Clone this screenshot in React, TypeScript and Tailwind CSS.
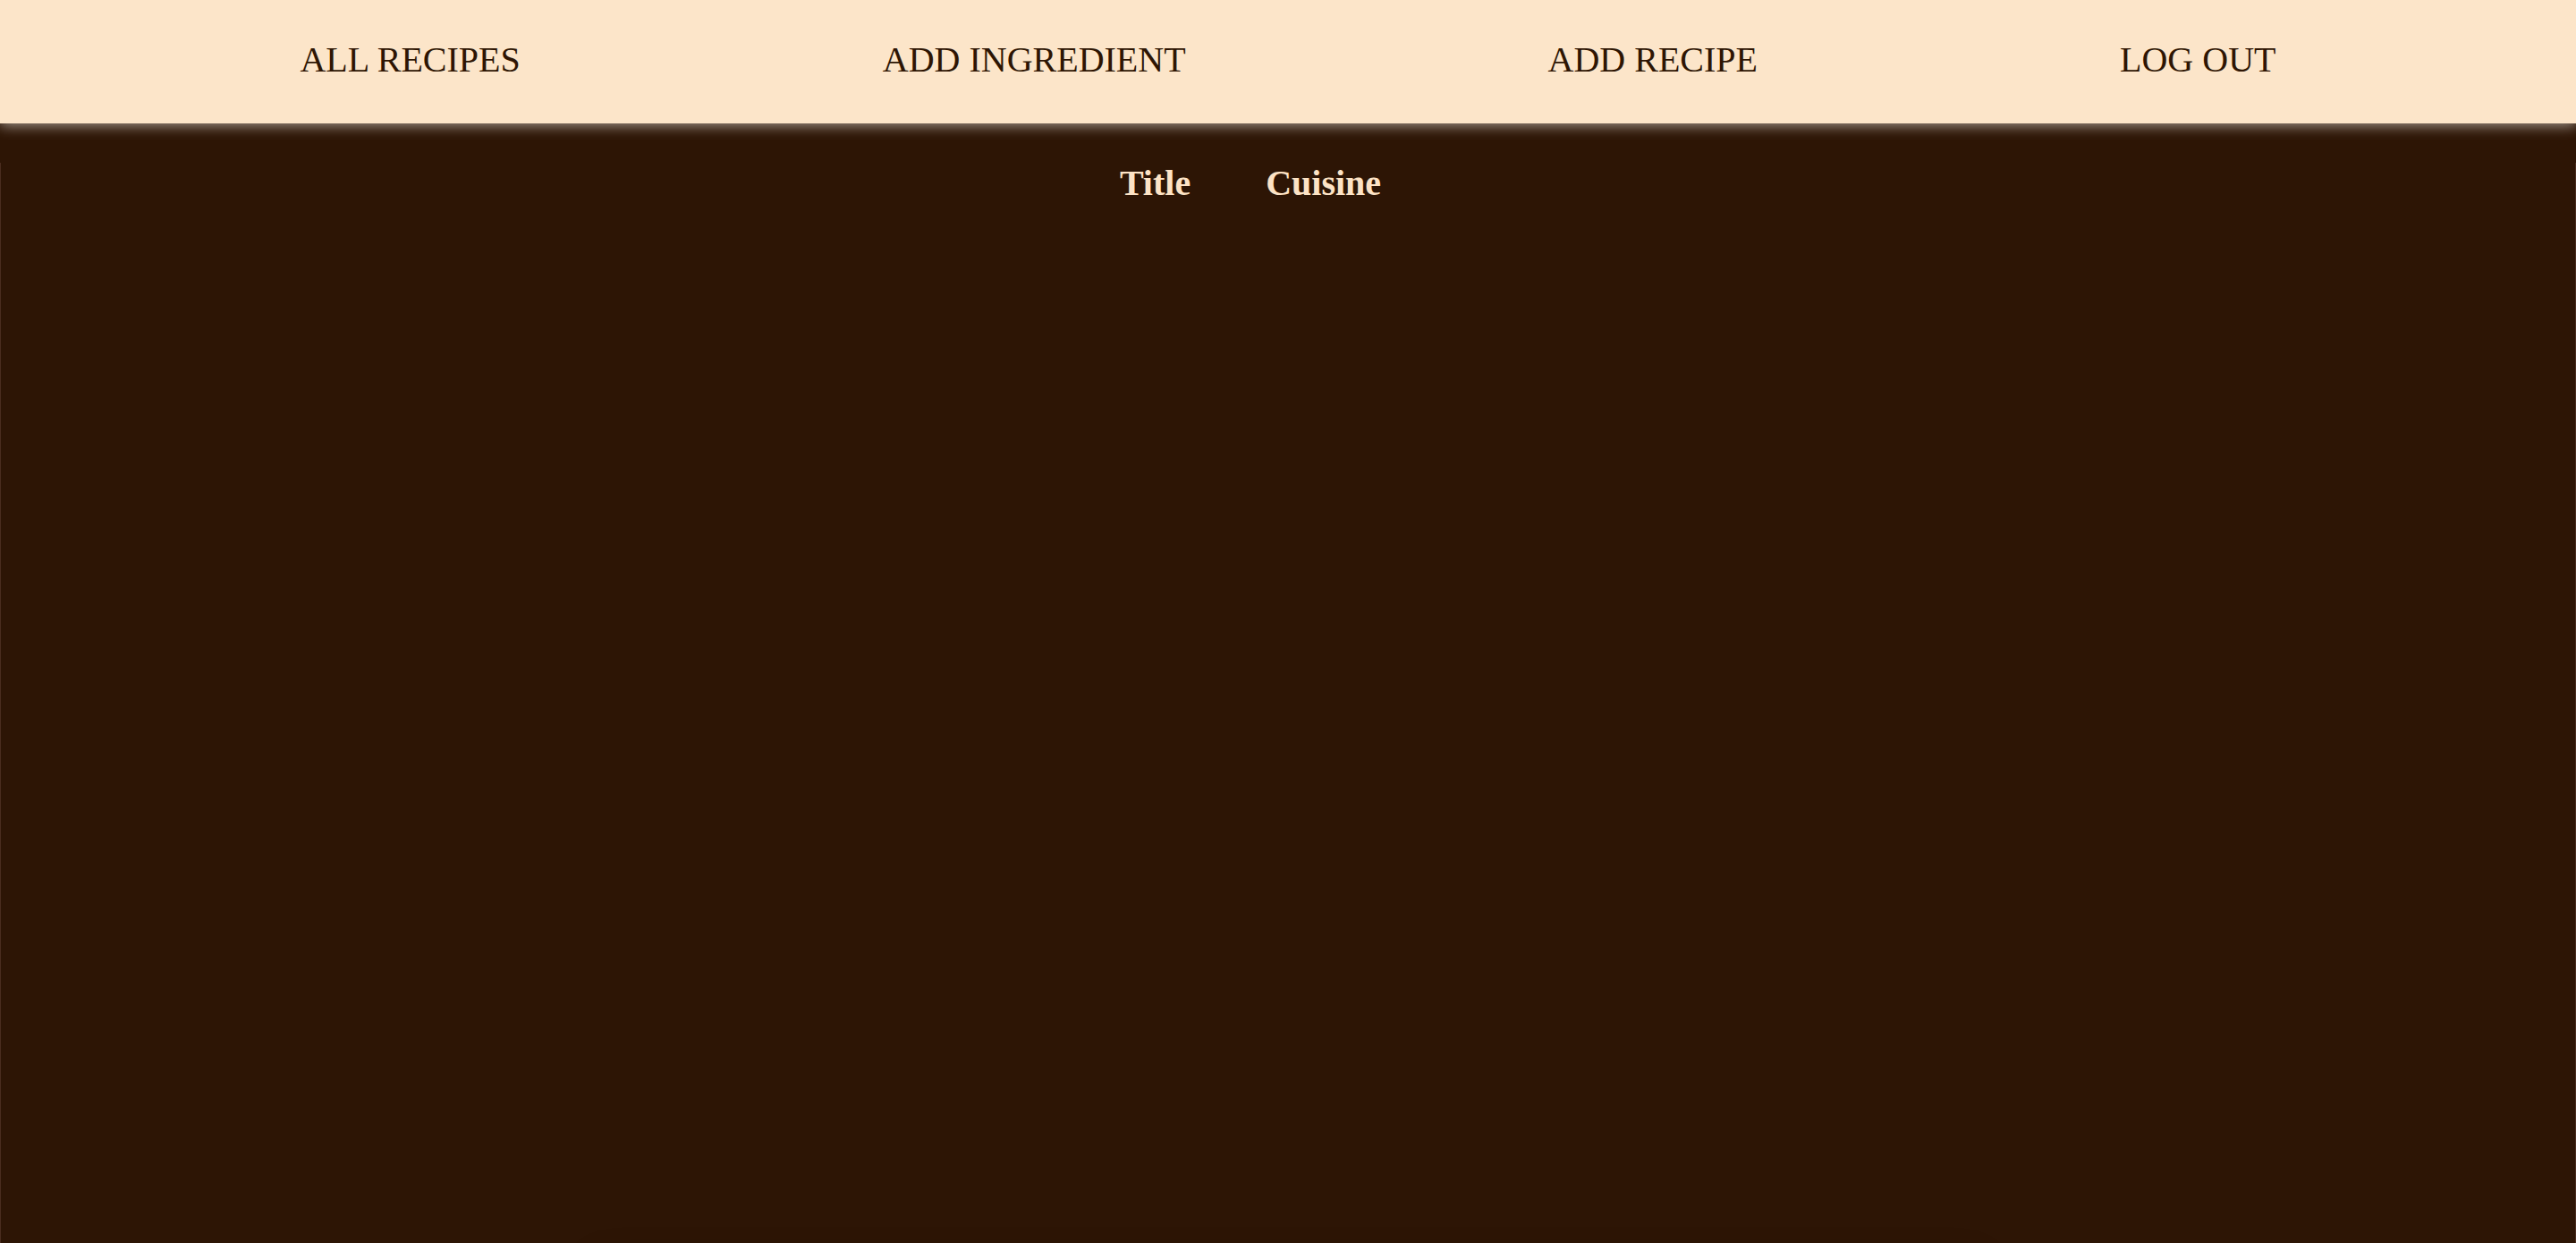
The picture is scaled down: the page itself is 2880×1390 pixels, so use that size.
import React from 'react';

const links = ['ALL RECIPES', 'ADD INGREDIENT', 'ADD RECIPE', 'LOG OUT'];

export default function App() {
  return (
    <div className="h-[1390px] overflow-hidden bg-[#2d1505] font-['Liberation_Serif',serif]">
      {/* Top navigation */}
      <nav className="relative z-10 h-[138px] bg-[#fce5c9] shadow-[0_3px_14px_rgba(170,160,150,0.9)] flex items-center justify-around px-[133px]">
        {links.map((label) => (
          <a key={label} href="#" className="text-[40px] leading-[1.15] text-[#2e1503] -mt-1">
            {label}
          </a>
        ))}
      </nav>

      {/* Recipe list */}
      <main className="relative h-[1252px] border-x border-[#4a2c1e] rounded-b-[24px]">
        <table className="mx-auto mt-[44px] translate-x-[-42px]">
          <thead>
            <tr>
              <th className="px-[42px] text-[40px] font-bold leading-[1.15] text-[#fde3c6]">Title</th>
              <th className="px-[42px] text-[40px] font-bold leading-[1.15] text-[#fde3c6]">Cuisine</th>
            </tr>
          </thead>
        </table>

        {/* Card peeking in from below the fold */}
        <div className="absolute left-[660px] right-[660px] top-[1230px] h-[200px] rounded-[24px] bg-[#2a1604] shadow-[0_-2px_36px_rgba(0,0,0,0.25)]" />
      </main>
    </div>
  );
}
